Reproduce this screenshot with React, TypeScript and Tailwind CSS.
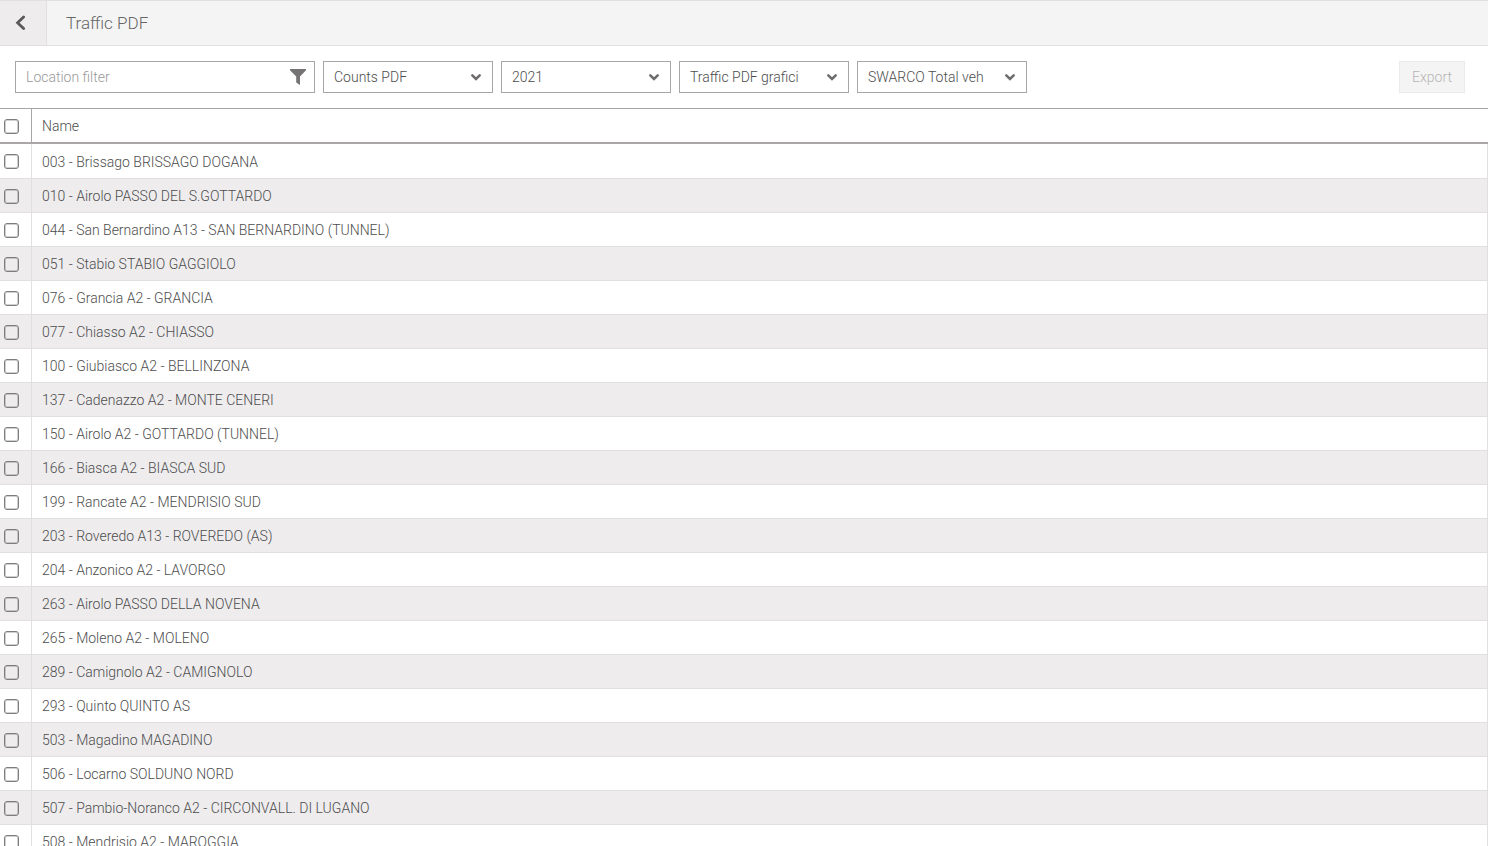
import { useState } from "react";

const locations = [
  "003 - Brissago BRISSAGO DOGANA",
  "010 - Airolo PASSO DEL S.GOTTARDO",
  "044 - San Bernardino A13 - SAN BERNARDINO (TUNNEL)",
  "051 - Stabio STABIO GAGGIOLO",
  "076 - Grancia A2 - GRANCIA",
  "077 - Chiasso A2 - CHIASSO",
  "100 - Giubiasco A2 - BELLINZONA",
  "137 - Cadenazzo A2 - MONTE CENERI",
  "150 - Airolo A2 - GOTTARDO (TUNNEL)",
  "166 - Biasca A2 - BIASCA SUD",
  "199 - Rancate A2 - MENDRISIO SUD",
  "203 - Roveredo A13 - ROVEREDO (AS)",
  "204 - Anzonico A2 - LAVORGO",
  "263 - Airolo PASSO DELLA NOVENA",
  "265 - Moleno A2 - MOLENO",
  "289 - Camignolo A2 - CAMIGNOLO",
  "293 - Quinto QUINTO AS",
  "503 - Magadino MAGADINO",
  "506 - Locarno SOLDUNO NORD",
  "507 - Pambio-Noranco A2 - CIRCONVALL. DI LUGANO",
  "508 - Mendrisio A2 - MAROGGIA",
];

const filters = [
  { label: "Report type", value: "Counts PDF" },
  { label: "Year", value: "2021" },
  { label: "Template", value: "Traffic PDF grafici" },
  { label: "Classification", value: "SWARCO Total veh" },
];

const BackIcon = () => (
  <svg viewBox="0 0 16 16" className="size-4" fill="none" stroke="currentColor" strokeWidth="2.8" strokeLinecap="round" strokeLinejoin="miter">
    <path d="M10.6 1.9 4.6 7.7l6 5.8" />
  </svg>
);

const ChevronIcon = () => (
  <svg viewBox="0 0 12 12" className="pointer-events-none absolute top-[10px] right-[11px] size-3 text-[#6f6c6d]" fill="none" stroke="currentColor" strokeWidth="2.5" strokeLinecap="round">
    <path d="M2.3 4.4 6 8l3.7-3.6" />
  </svg>
);

const FilterIcon = () => (
  <svg viewBox="0 0 16 16" className="pointer-events-none absolute top-2 right-[9px] size-4 text-[#767374]" fill="currentColor">
    <path d="M0 0h16v1.2L10 7.6V16L6.2 13.6v-6L0 1.2z" />
  </svg>
);

type CheckboxProps = {
  label: string;
  checked: boolean;
  onChange: () => void;
};

const Checkbox = ({ label, checked, onChange }: CheckboxProps) => (
  <input
    type="checkbox"
    aria-label={label}
    checked={checked}
    onChange={onChange}
    className="block size-[15px] appearance-none rounded-[3px] border border-[#7f7c7d] bg-transparent inset-ring inset-ring-[#7f7c7d]/35 checked:bg-[#767374]"
  />
);

const Select = ({ label, value }: { label: string; value: string }) => (
  <div className="relative w-[170px]">
    <select
      aria-label={label}
      defaultValue={value}
      className="h-8 w-full appearance-none border border-[#aaa6a7] bg-white pr-8 pl-[10px] font-light text-[#4d4d4d]"
    >
      <option>{value}</option>
    </select>
    <ChevronIcon />
  </div>
);

const App = () => {
  const [query, setQuery] = useState("");
  const [selected, setSelected] = useState<string[]>([]);

  const rows = locations.filter((name) =>
    name.toLowerCase().includes(query.toLowerCase())
  );
  const allSelected = selected.length === locations.length;

  const toggle = (name: string) =>
    setSelected((prev) =>
      prev.includes(name) ? prev.filter((n) => n !== name) : [...prev, name]
    );

  return (
    <div className="flex h-screen flex-col overflow-hidden bg-white font-[Roboto,sans-serif] text-sm font-light text-[#4d4d4d]">
      <header className="flex h-[46px] shrink-0 items-stretch border-y border-[#e1e0e0] bg-[#f4f4f4]">
        <button
          type="button"
          aria-label="Back"
          className="flex w-[47px] items-center border-r border-[#e1e0e0] bg-[#eeeced] pl-[13px] text-[#5a5859]"
        >
          <BackIcon />
        </button>
        <h1 className="self-center pl-[19px] text-[17px] font-light text-[#666]">Traffic PDF</h1>
      </header>

      <div className="flex shrink-0 items-center gap-2 py-[15px] pr-[23px] pl-[15px]">
        <div className="relative w-[300px]">
          <input
            type="text"
            aria-label="Location filter"
            placeholder="Location filter"
            value={query}
            onChange={(e) => setQuery(e.target.value)}
            className="block h-8 w-full border border-[#aaa6a7] pr-9 pl-[10px] placeholder:text-[#999]"
          />
          <FilterIcon />
        </div>
        {filters.map((filter) => (
          <Select key={filter.label} {...filter} />
        ))}
        <button
          type="button"
          disabled
          className="ml-auto h-8 w-[66px] border border-[#ebeaea] bg-[#f4f4f4] text-[#b5b5b5]"
        >
          Export
        </button>
      </div>

      <div className="min-h-0 flex-1 overflow-y-auto border-t border-[#aaa6a7] [scrollbar-width:none]">
        <table className="w-full border-separate border-spacing-0 text-left">
          <thead className="sticky top-0 z-10 bg-white">
            <tr className="h-[35px]">
              <th className="w-8 border-r border-b-2 border-[#aaa6a7] p-0 pt-px pl-1">
                <Checkbox
                  label="Select all"
                  checked={allSelected}
                  onChange={() => setSelected(allSelected ? [] : locations)}
                />
              </th>
              <th className="border-b-2 border-[#aaa6a7] p-0 pt-px pl-[10px] font-light">Name</th>
            </tr>
          </thead>
          <tbody>
            {rows.map((name) => (
              <tr key={name} className="h-[34px] first:h-[35px] even:bg-[#eeeced]">
                <td className="w-8 border-r border-b border-[#e1e0e0] p-0 pt-px pl-1">
                  <Checkbox
                    label={name}
                    checked={selected.includes(name)}
                    onChange={() => toggle(name)}
                  />
                </td>
                <td className="border-r border-b border-[#e1e0e0] p-0 pt-px pl-[10px]">{name}</td>
              </tr>
            ))}
          </tbody>
        </table>
      </div>
    </div>
  );
};

export default App;
